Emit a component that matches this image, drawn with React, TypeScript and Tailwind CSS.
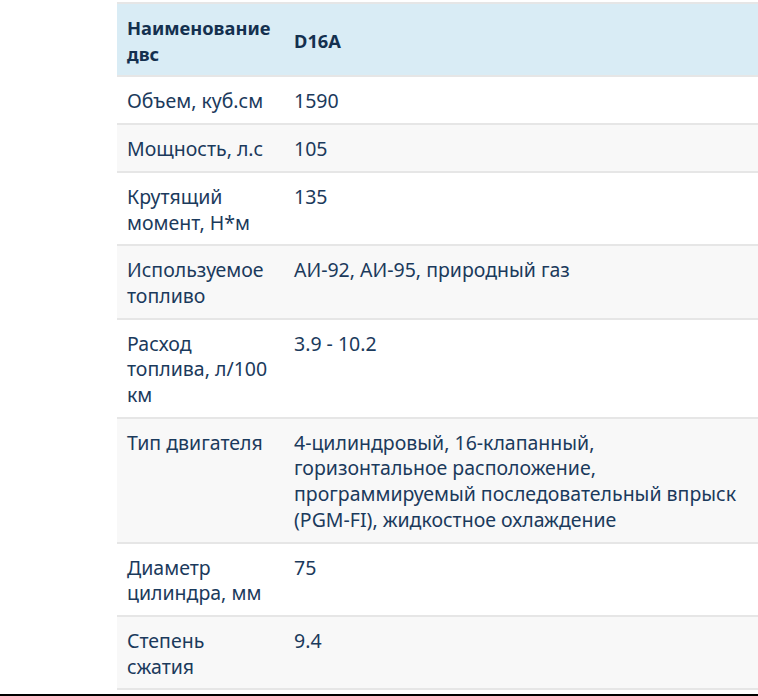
import React from "react";

const rows: [string, string][] = [
  ["Объем, куб.см", "1590"],
  ["Мощность, л.с", "105"],
  ["Крутящий момент, Н*м", "135"],
  ["Используемое топливо", "АИ-92, АИ-95, природный газ"],
  ["Расход топлива, л/100 км", "3.9 - 10.2"],
  [
    "Тип двигателя",
    "4-цилиндровый, 16-клапанный, горизонтальное расположение, программируемый последовательный впрыск (PGM-FI), жидкостное охлаждение",
  ],
  ["Диаметр цилиндра, мм", "75"],
  ["Степень сжатия", "9.4"],
];

export default function App() {
  return (
    <div
      className="flex flex-col w-[758px] h-[696px] overflow-hidden bg-white text-[#1b3a5c]"
      style={{ fontFamily: '"Noto Sans", "Open Sans", sans-serif' }}
    >
      <div className="pt-[2px] pl-[117px]">
        <table className="w-[641px] border-collapse text-[19.5px] leading-[25.7px]">
          <thead>
            <tr className="bg-[#d9ecf5] border-t-2 border-b-2 border-[#e6e6e6]">
              <th className="w-[167px] px-[10px] pt-[11px] pb-[9px] text-left align-middle font-bold text-[18.3px] text-[#14304f]">
                Наименование двс
              </th>
              <th className="px-[10px] pt-[11px] pb-[9px] text-left align-middle font-bold text-[18.3px] text-[#14304f]">
                D16A
              </th>
            </tr>
          </thead>
          <tbody>
            {rows.map(([k, v], i) => (
              <tr
                key={k}
                className={
                  (i % 2 === 1 ? "bg-[#f8f8f8] " : "bg-white ") +
                  "border-b-2 border-[#e6e6e6]"
                }
              >
                <td className="w-[167px] px-[10px] pt-[11px] pb-[9px] align-top">{k}</td>
                <td className="px-[10px] pt-[11px] pb-[9px] align-top">{v}</td>
              </tr>
            ))}
          </tbody>
        </table>
      </div>
      <div className="mt-auto h-[2px] shrink-0 bg-black" />
    </div>
  );
}
